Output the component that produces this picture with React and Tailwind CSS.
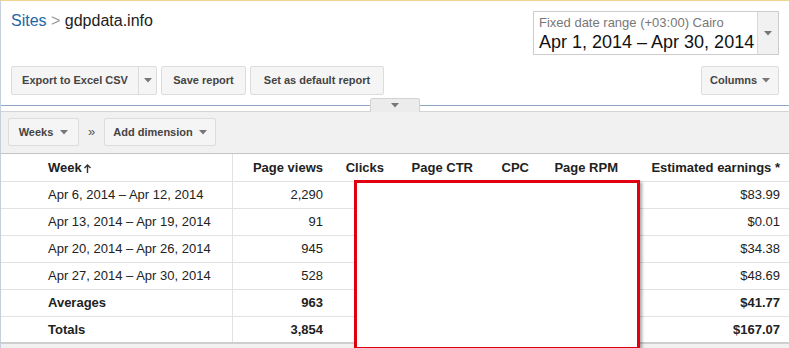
import React from 'react';

const Caret = ({ className = '' }) => (
  <svg width="8" height="5" viewBox="0 0 8 5" className={className}>
    <path d="M0 0 H8 L4 4.5 Z" fill="#777" />
  </svg>
);

const Button = ({ children, className = '' }) => (
  <div
    className={`h-full flex items-center bg-[#f5f5f5] border border-[#dcdcdc] rounded-[2px] text-[11px] font-bold text-[#444] ${className}`}
  >
    {children}
  </div>
);

const rows = [
  { week: 'Apr 6, 2014 – Apr 12, 2014', views: '2,290', earn: '$83.99' },
  { week: 'Apr 13, 2014 – Apr 19, 2014', views: '91', earn: '$0.01' },
  { week: 'Apr 20, 2014 – Apr 26, 2014', views: '945', earn: '$34.38' },
  { week: 'Apr 27, 2014 – Apr 30, 2014', views: '528', earn: '$48.69' },
  { week: 'Averages', views: '963', earn: '$41.77', bold: true },
  { week: 'Totals', views: '3,854', earn: '$167.07', bold: true, last: true },
];

const Row = ({ cells, className = '' }) => (
  <div className={`flex items-center ${className}`}>
    <div className="w-[232px] h-full flex items-center pl-[47px] border-r border-[#e2e2e2]">{cells[0]}</div>
    <div className="w-[98px] h-full flex items-center justify-end pr-[8px]">{cells[1]}</div>
    <div className="w-[61px] h-full flex items-center justify-end pr-[8px]">{cells[2]}</div>
    <div className="w-[89px] h-full flex items-center justify-end pr-[8px]">{cells[3]}</div>
    <div className="w-[56px] h-full flex items-center justify-end pr-[8px]">{cells[4]}</div>
    <div className="w-[89px] h-full flex items-center justify-end pr-[8px]">{cells[5]}</div>
    <div className="w-[162px] h-full flex items-center justify-end pr-[8px]">{cells[6]}</div>
  </div>
);

export default function App() {
  return (
    <div className="relative w-[789px] h-[348px] overflow-hidden bg-white border-t border-l border-t-[#f0d48c] border-l-[#c5d0dc] font-['Liberation_Sans',Arial,sans-serif] text-[#222]">
      {/* top: breadcrumb + date range */}
      <div className="h-[94px] pl-[10px] pr-[10px] pt-[10px]">
        <div className="flex justify-between items-start">
          <div className="text-[16px] leading-[18px] mt-[1px]">
            <span className="text-[#1e66a8]">Sites</span>
            <span className="text-[#999]"> &gt; </span>
            <span className="text-[#222]">gdpdata.info</span>
          </div>
          <div className="flex h-[44px] w-[246px] border border-[#cccccc] bg-white">
            <div className="flex-1 pl-[5px] pt-[3px]">
              <div className="text-[13px] leading-[15px] text-[#777]">Fixed date range (+03:00) Cairo</div>
              <div className="text-[18px] leading-[20px] mt-[2px] text-[#111]">Apr 1, 2014 – Apr 30, 2014</div>
            </div>
            <div className="w-[21px] bg-[#f1f1f1] border-l border-[#dadada] flex justify-center pt-[19px]">
              <Caret />
            </div>
          </div>
        </div>
        <div className="flex justify-between h-[29px] mt-[11px]">
          <div className="flex gap-[4px] h-full">
            <Button className="p-0">
              <div className="w-[127px] h-full flex items-center justify-center border-r border-[#dcdcdc]">Export to Excel CSV</div>
              <div className="w-[17px] flex justify-center"><Caret /></div>
            </Button>
            <Button className="w-[85px] justify-center">Save report</Button>
            <Button className="w-[134px] justify-center">Set as default report</Button>
          </div>
          <Button className="w-[78px] justify-center gap-[5px]">
            Columns <Caret />
          </Button>
        </div>
      </div>

      {/* collapse separator */}
      <div className="relative">
        <div className="h-[10px]" />
        <div className="h-px bg-[#8ea6c4]" />
        <div className="h-[5px]" />
        <div className="h-px bg-[#d4d4d4]" />
        <div className="absolute left-[369px] top-[3px] w-[50px] h-[14px] bg-[#ececec] border border-b-0 border-[#d2d2d2] rounded-t-[3px] flex justify-center pt-[4px]">
          <Caret />
        </div>
      </div>

      {/* dimension toolbar */}
      <div className="h-[41px] bg-[#f1f1f1] pl-[7px] pt-[6px] flex items-start">
        <div className="flex items-center h-[28px]">
          <Button className="w-[71px] justify-center gap-[7px]">Weeks <Caret /></Button>
          <span className="w-[25px] text-center text-[13px] text-[#555]">»</span>
          <Button className="w-[112px] justify-center gap-[6px]">Add dimension <Caret /></Button>
        </div>
      </div>

      {/* table */}
      <div className="border-t border-[#c4c4c4] text-[13px]">
        <Row
          className="h-[28px] border-b border-[#e2e2e2] font-bold"
          cells={[
            <span className="flex items-center">
              Week
              <svg width="7" height="9" viewBox="0 0 7 9" className="ml-[2px] mt-[1px]">
                <path d="M3.5 1 V9 M0.5 4 L3.5 1 L6.5 4" stroke="#333" strokeWidth="1.4" fill="none" />
              </svg>
            </span>,
            'Page views',
            'Clicks',
            'Page CTR',
            'CPC',
            'Page RPM',
            'Estimated earnings *',
          ]}
        />
        {rows.map((r) => (
          <Row
            key={r.week}
            className={`h-[27px] ${r.last ? 'border-b-2 border-[#cfcfcf]' : 'border-b border-[#e2e2e2]'} ${r.bold ? 'font-bold' : ''}`}
            cells={[r.week, r.views, '', '', '', '', r.earn]}
          />
        ))}
        <div className="h-[10px] bg-[#f1f1f1]" />
      </div>

      {/* red highlight box over hidden figures */}
      <div className="absolute left-[353px] top-[179px] w-[286px] h-[170px] bg-white border-[3px] border-[#e1000f] shadow-[2px_2px_3px_rgba(0,0,0,0.35)]" />
    </div>
  );
}
